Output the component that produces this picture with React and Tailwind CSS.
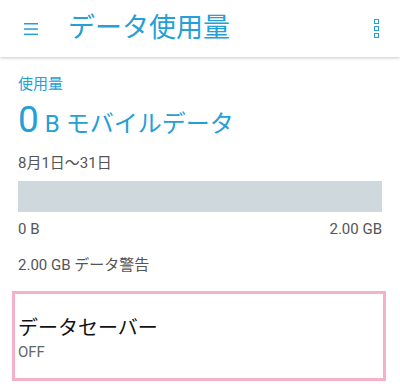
import React from 'react';

const font = { fontFamily: "Roboto, 'Noto Sans CJK JP', sans-serif" };

const App = () => {
  return (
    <div className="w-[400px] h-[392px] bg-white overflow-hidden" style={font}>
      {/* ツールバー */}
      <header className="relative h-[57px] flex items-center bg-white shadow-[0_1px_3px_rgba(0,0,0,0.22)]">
        <svg className="ml-[24px]" width="14" height="14" viewBox="0 0 14 14">
          <rect x="0" y="1" width="14" height="1.5" fill="#24a0d6" />
          <rect x="0" y="6.3" width="14" height="1.5" fill="#24a0d6" />
          <rect x="0" y="11.6" width="14" height="1.5" fill="#24a0d6" />
        </svg>
        <div className="ml-[30px] text-[27px] leading-none text-[#24a0d6]">データ使用量</div>
        <div className="ml-auto mr-[21px] flex flex-col gap-[2px]">
          <span className="block w-[5px] h-[5px] border-[1.5px] border-[#24a0d6]" />
          <span className="block w-[5px] h-[5px] border-[1.5px] border-[#24a0d6]" />
          <span className="block w-[5px] h-[5px] border-[1.5px] border-[#24a0d6]" />
        </div>
      </header>

      <div className="px-[18px]">
        <div className="mt-[17px] text-[15px] leading-[20px] text-[#24a0d6]">使用量</div>
        <div className="mt-[7px] flex items-baseline text-[#24a0d6] leading-[38px]">
          <span className="text-[37px]">0</span>
          <span className="ml-[6px] text-[24px]">B</span>
          <span className="ml-[6px] text-[24px]">モバイルデータ</span>
        </div>
        <div className="mt-[10px] text-[15px] leading-[20px] text-[#555]">8月1日～31日</div>
        <div className="mt-[8px] h-[31px] bg-[#cfd8dc]" />
        <div className="mt-[7px] flex justify-between text-[15px] leading-[20px] text-[#555]">
          <span>0 B</span>
          <span>2.00 GB</span>
        </div>
        <div className="mt-[16px] text-[15px] leading-[20px] text-[#555]">2.00 GB データ警告</div>
      </div>

      <div className="mt-[16px] ml-[12px] w-[374px] h-[90px] border-[3px] border-[#f5b1c9] pl-[3px] pt-[21px]">
        <div className="text-[20px] leading-[26px] text-[#111]">データセーバー</div>
        <div className="mt-[1px] text-[15px] leading-[20px] text-[#666]">OFF</div>
      </div>
    </div>
  );
};

export default App;
